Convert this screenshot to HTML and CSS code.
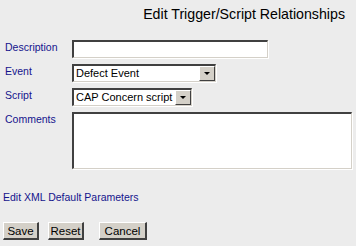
FILE: index.html
```html
<!DOCTYPE html>
<html>
<head>
<meta charset="utf-8">
<link rel="stylesheet" href="styles.css">
</head>
<body>
<div class="page">
  <h1 class="title">Edit Trigger/Script Relationships</h1>
  <div class="form">
    <label class="lbl">Description</label>
    <div class="ctl"><div class="input desc"></div></div>
    <label class="lbl">Event</label>
    <div class="ctl"><div class="select ev"><span class="val">Defect Event</span><span class="arrow"><span class="tri"></span></span></div></div>
    <label class="lbl">Script</label>
    <div class="ctl"><div class="select sc"><span class="val">CAP Concern script</span><span class="arrow"><span class="tri"></span></span></div></div>
    <label class="lbl">Comments</label>
    <div class="ctl"><div class="input area"></div></div>
  </div>
  <a class="link">Edit XML Default Parameters</a>
  <div class="buttons">
    <span class="btn save">Save</span>
    <span class="btn reset">Reset</span>
    <span class="btn cancel">Cancel</span>
  </div>
</div>
</body>
</html>
```
FILE: styles.css
```css
html, body {
  margin: 0;
  padding: 0;
  background: #ececec;
}
.page {
  width: 356px;
  height: 246px;
  font-family: "Liberation Sans", Arial, sans-serif;
  font-size: 10.5px;
  color: #000;
}
.title {
  margin: 0;
  padding: 6px 11px 0 0;
  height: 40px;
  box-sizing: border-box;
  text-align: right;
  font-weight: normal;
  font-size: 14.2px;
  line-height: 16px;
  color: #000;
}
.form {
  display: grid;
  grid-template-columns: 67px 1fr;
  padding-left: 5px;
  row-gap: 6px;
}
.lbl {
  color: #14148c;
  line-height: 14px;
}
.ctl {
  display: flex;
}
.input {
  background: #fff;
  box-sizing: border-box;
  border-top: 2px solid #404040;
  border-left: 2px solid #404040;
  border-bottom: 1px solid #d4d0c8;
  border-right: 1px solid #d4d0c8;
  box-shadow: 1px 1px 0 #fff;
}
.desc {
  width: 196px;
  height: 18px;
}
.area {
  width: 280px;
  height: 57px;
}
.select {
  display: flex;
  align-items: stretch;
  box-sizing: border-box;
  height: 18px;
  background: #fff;
  border-top: 2px solid #404040;
  border-left: 2px solid #404040;
  border-bottom: 1px solid #d4d0c8;
  border-right: 1px solid #d4d0c8;
  box-shadow: 1px 1px 0 #fff;
}
.ev { width: 144px; }
.sc { width: 120px; }
.val {
  flex: 1;
  font-size: 11px;
  line-height: 15px;
  padding-left: 2px;
  white-space: nowrap;
  overflow: hidden;
}
.arrow {
  width: 16px;
  box-sizing: border-box;
  background: #d4d0c8;
  border-top: 1px solid #fff;
  border-left: 1px solid #fff;
  border-right: 1px solid #404040;
  border-bottom: 1px solid #404040;
  display: flex;
  align-items: center;
  justify-content: center;
}
.tri {
  width: 0;
  height: 0;
  border-left: 3px solid transparent;
  border-right: 3px solid transparent;
  border-top: 3px solid #000;
}
.link {
  display: block;
  color: #14148c;
  margin: 21px 0 0 3px;
  line-height: 14px;
}
.buttons {
  display: flex;
  gap: 9px;
  padding: 18px 0 0 3px;
}
.btn {
  box-sizing: border-box;
  height: 18px;
  line-height: 14px;
  font-size: 11.5px;
  background: #d4d0c8;
  border-top: 1px solid #fff;
  border-left: 1px solid #fff;
  border-right: 2px solid #404040;
  border-bottom: 2px solid #404040;
  text-align: center;
  padding-top: 1px;
}
.save { width: 36px; }
.reset { width: 36px; }
.cancel { width: 48px; margin-left: 6px; }
```
